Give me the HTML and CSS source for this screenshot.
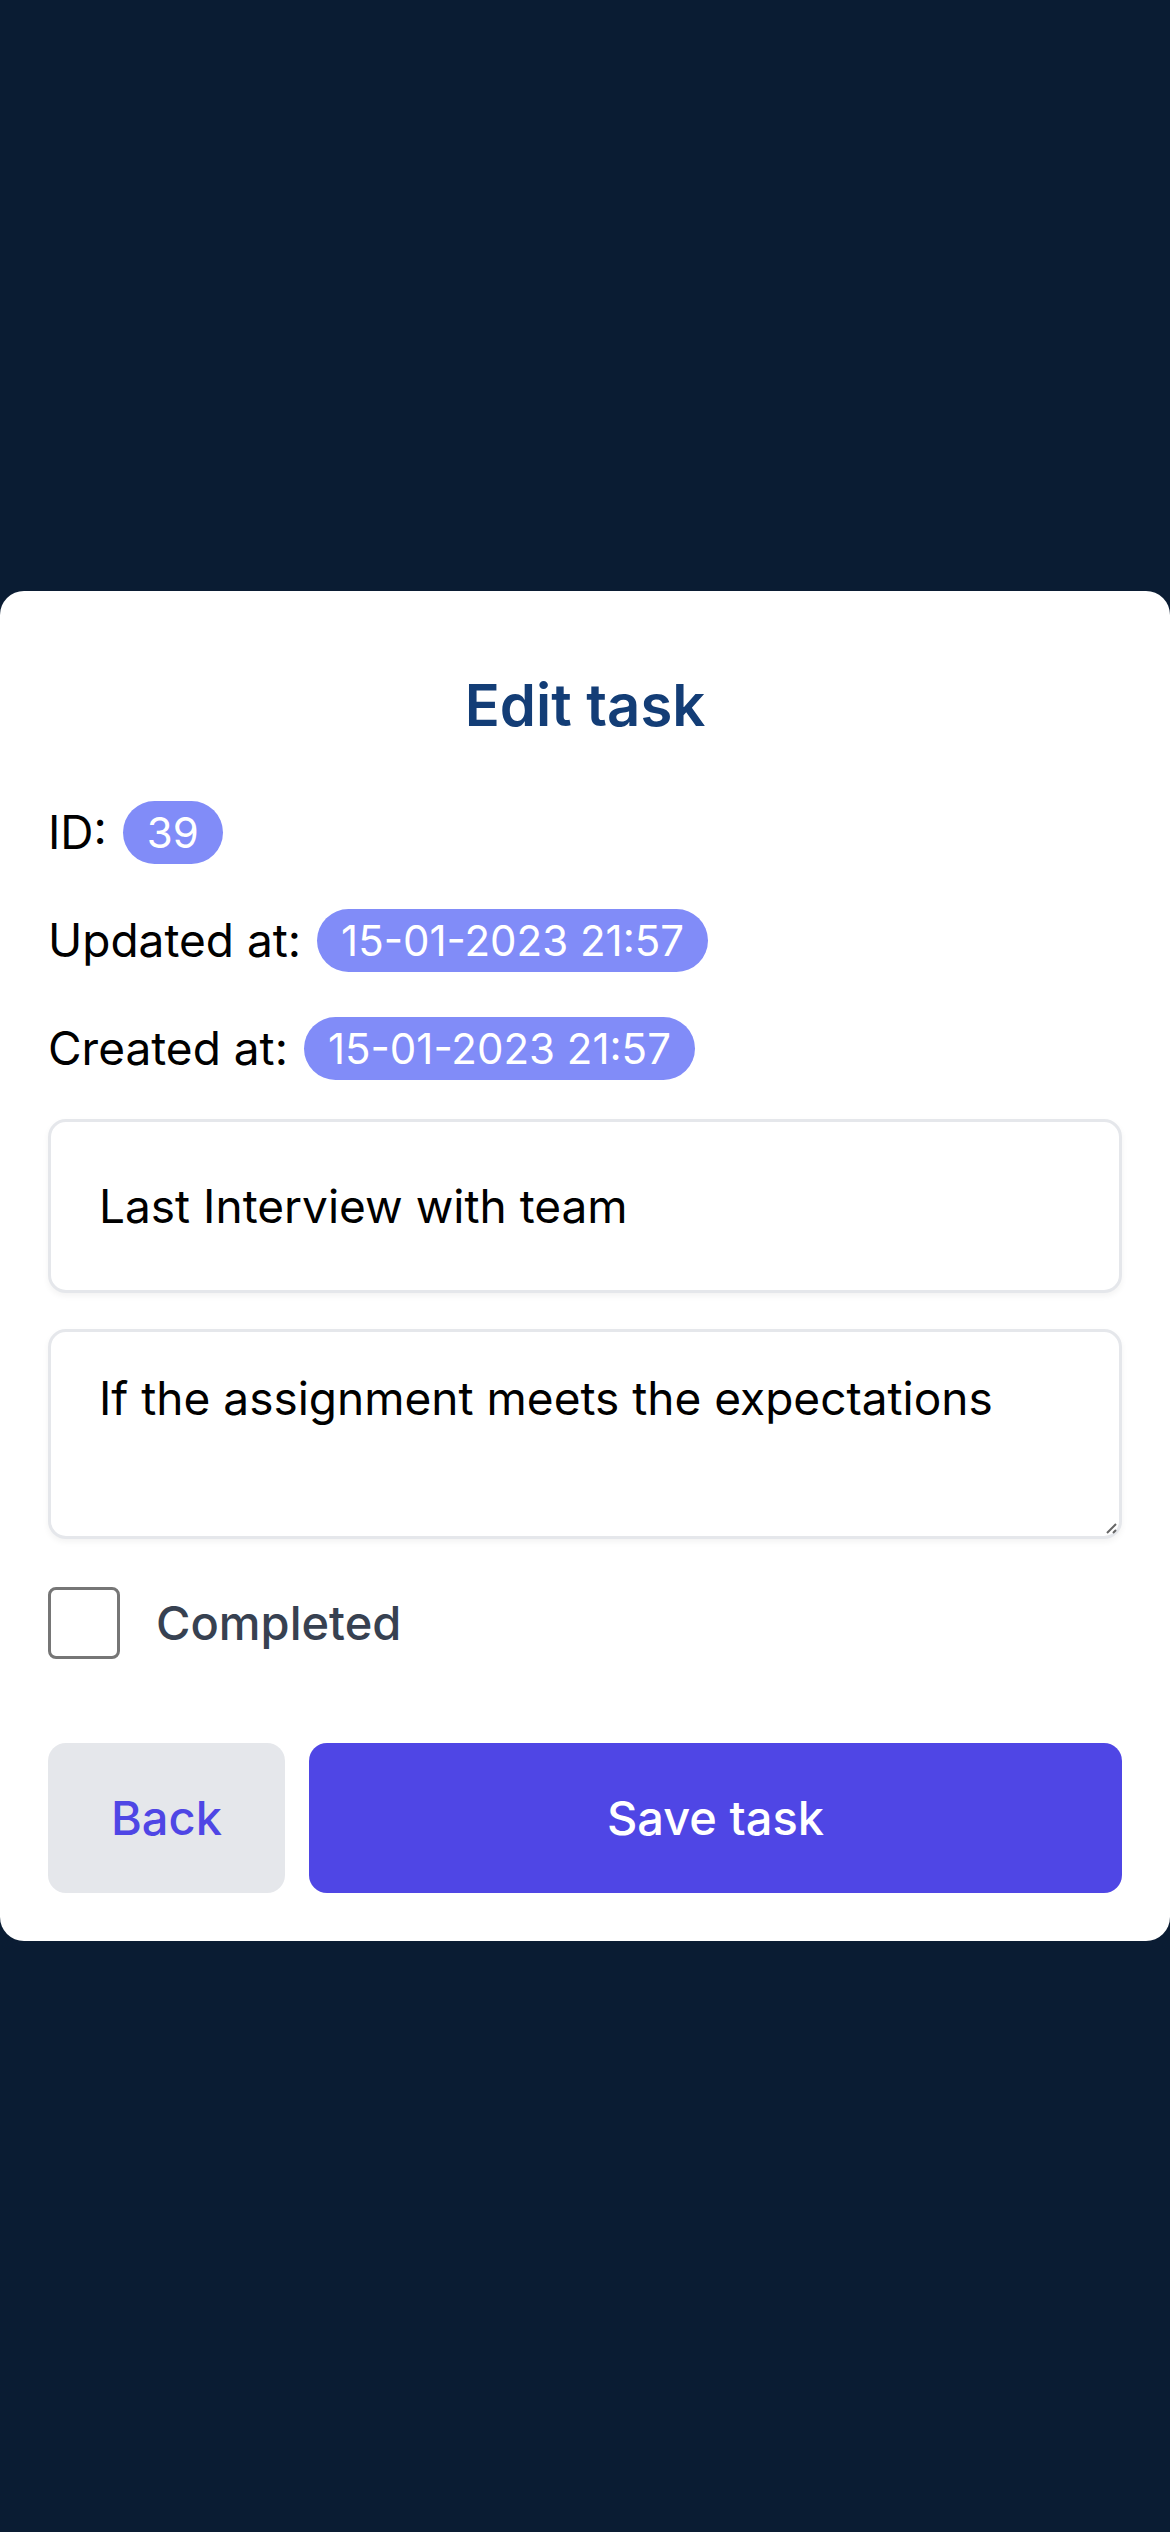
FILE: index.html
```html
<!DOCTYPE html>
<html lang="en">
<head>
<meta charset="utf-8">
<meta name="viewport" content="width=device-width, initial-scale=1">
<title>Edit task</title>
<link rel="stylesheet" href="styles.css">
</head>
<body>
<main class="page">
  <form class="card">
    <h1 class="title">Edit task</h1>
    <div class="details">
      <p class="detail">ID: <span class="badge">39</span></p>
      <p class="detail">Updated at: <span class="badge">15-01-2023 21:57</span></p>
      <p class="detail">Created at: <span class="badge">15-01-2023 21:57</span></p>
    </div>
    <div class="fields">
      <input class="field" type="text" name="title" aria-label="Title" value="Last Interview with team">
      <textarea class="field field-area" name="description" aria-label="Description" rows="2">If the assignment meets the expectations</textarea>
    </div>
    <div class="check">
      <input class="check-box" type="checkbox" id="completed" name="completed">
      <label class="check-label" for="completed">Completed</label>
    </div>
    <div class="actions">
      <button class="button button-back" type="button">Back</button>
      <button class="button button-save" type="submit">Save task</button>
    </div>
  </form>
</main>
</body>
</html>
```
FILE: styles.css
```css
* {
  box-sizing: border-box;
}

body {
  margin: 0;
  background: #0a1c33;
  color: #000;
  font-family: Inter, "Liberation Sans", sans-serif;
  font-size: 46px;
  line-height: 72px;
}

.page {
  display: flex;
  align-items: center;
  min-height: 100vh;
}

.card {
  display: flex;
  flex-direction: column;
  width: 100%;
  padding: 72px 48px 48px;
  border-radius: 24px;
  background: #fff;
}

.title {
  margin: 0;
  color: #133d76;
  font-size: 58px;
  font-weight: 600;
  line-height: 84px;
  text-align: center;
}

.details {
  display: flex;
  flex-direction: column;
  gap: 36px;
  margin-top: 49px;
}

.detail {
  display: flex;
  align-items: center;
  gap: 16px;
  margin: 0;
}

.badge {
  padding: 0 24px;
  border-radius: 36px;
  background: #818cf8;
  color: #fff;
  font-size: 42px;
  line-height: 63px;
}

.fields {
  display: flex;
  flex-direction: column;
  gap: 36px;
  margin-top: 35px;
}

.field {
  display: block;
  width: 100%;
  height: 174px;
  padding: 30px 48px;
  border: 3px solid #e5e7eb;
  border-radius: 18px;
  background: #fff;
  box-shadow: 0 3px 6px rgba(0, 0, 0, 0.05);
  color: inherit;
  font: inherit;
}

.field-area {
  height: 210px;
  resize: vertical;
}

.field-area::-webkit-resizer {
  background: url("data:image/svg+xml,%3Csvg xmlns='http://www.w3.org/2000/svg' width='15' height='15' fill='none' stroke='%23666' stroke-width='2'%3E%3Cpath d='M3 12 12 3M9 12l3-3'/%3E%3C/svg%3E") right bottom no-repeat;
}

.check {
  display: flex;
  align-items: center;
  gap: 36px;
  margin-top: 48px;
}

.check-box {
  appearance: none;
  width: 72px;
  height: 72px;
  margin: 0;
  border: 3px solid #767676;
  border-radius: 8px;
  background: #fff;
}

.check-box:checked {
  background: #4f46e5;
}

.check-label {
  color: #374151;
  font-size: 47px;
  font-weight: 500;
}

.actions {
  display: flex;
  gap: 24px;
  margin-top: 84px;
}

.button {
  padding: 39px 63px;
  border: 0;
  border-radius: 18px;
  font: inherit;
  font-size: 47px;
  font-weight: 500;
}

.button-back {
  background: #e5e7eb;
  color: #4f46e5;
}

.button-save {
  flex: 1;
  background: #4f46e5;
  color: #fff;
}
```
